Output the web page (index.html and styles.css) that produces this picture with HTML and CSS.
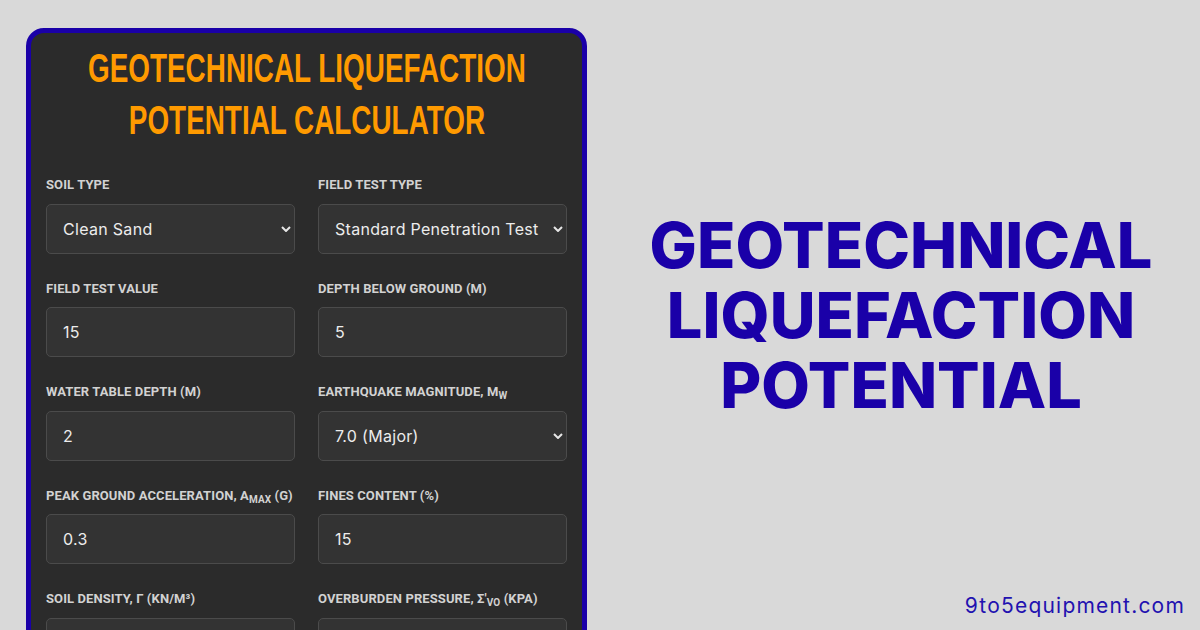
FILE: index.html
```html
<!DOCTYPE html>
<html lang="en">
<head>
<meta charset="utf-8">
<title>Geotechnical Liquefaction Potential Calculator</title>
<link rel="stylesheet" href="styles.css">
</head>
<body>
<main class="page">
  <section class="card">
    <h1 class="card-title"><span class="title-text">Geotechnical Liquefaction<br>Potential Calculator</span></h1>
    <form class="form-grid">
      <div class="field">
        <label class="field-label" for="soil">Soil Type</label>
        <div class="select-wrap">
          <select id="soil" class="control"><option>Clean Sand</option></select>
          <svg class="chev" viewBox="0 0 10 6" width="10" height="6"><path d="M1 1 L5 5 L9 1" fill="none" stroke="#e6e6e6" stroke-width="2"/></svg>
        </div>
      </div>
      <div class="field">
        <label class="field-label" for="test">Field Test Type</label>
        <div class="select-wrap">
          <select id="test" class="control"><option>Standard Penetration Test</option></select>
          <svg class="chev" viewBox="0 0 10 6" width="10" height="6"><path d="M1 1 L5 5 L9 1" fill="none" stroke="#e6e6e6" stroke-width="2"/></svg>
        </div>
      </div>
      <div class="field">
        <label class="field-label" for="ftv">Field Test Value</label>
        <input id="ftv" class="control" type="text" value="15">
      </div>
      <div class="field">
        <label class="field-label" for="depth">Depth Below Ground (m)</label>
        <input id="depth" class="control" type="text" value="5">
      </div>
      <div class="field">
        <label class="field-label" for="wt">Water Table Depth (m)</label>
        <input id="wt" class="control" type="text" value="2">
      </div>
      <div class="field">
        <label class="field-label" for="mag">Earthquake Magnitude, M<sub>w</sub></label>
        <div class="select-wrap">
          <select id="mag" class="control"><option>7.0 (Major)</option></select>
          <svg class="chev" viewBox="0 0 10 6" width="10" height="6"><path d="M1 1 L5 5 L9 1" fill="none" stroke="#e6e6e6" stroke-width="2"/></svg>
        </div>
      </div>
      <div class="field">
        <label class="field-label" for="pga">Peak Ground Acceleration, a<sub>max</sub> (g)</label>
        <input id="pga" class="control" type="text" value="0.3">
      </div>
      <div class="field">
        <label class="field-label" for="fc">Fines Content (%)</label>
        <input id="fc" class="control" type="text" value="15">
      </div>
      <div class="field">
        <label class="field-label" for="dens">Soil Density, γ (kN/m³)</label>
        <input id="dens" class="control" type="text" value="18">
      </div>
      <div class="field">
        <label class="field-label" for="ob">Overburden Pressure, σ'<sub>vo</sub> (kPa)</label>
        <input id="ob" class="control" type="text" value="">
      </div>
    </form>
  </section>
  <section class="hero">
    <div></div>
    <h2 class="hero-title">Geotechnical<br>Liquefaction<br>Potential</h2>
    <div class="hero-foot"><span class="site">9to5equipment.com</span></div>
  </section>
</main>
</body>
</html>
```

FILE: styles.css
```css
html, body {
  margin: 0;
  padding: 0;
}
body {
  width: 1200px;
  height: 630px;
  overflow: hidden;
  background: #d9d9d9;
}
.page {
  display: flex;
  width: 1200px;
  height: 630px;
}
.card {
  flex: none;
  width: 561px;
  min-width: 0;
  box-sizing: border-box;
  margin: 28px 0 0 26px;
  height: 660px;
  border: 5px solid #1a00a8;
  border-radius: 18px;
  background: #2b2b2b;
  padding: 9px 15px 0;
  overflow: hidden;
}
.card-title {
  display: flex;
  justify-content: center;
  margin: 0 0 31px;
  font-family: "Liberation Sans", Arial, sans-serif;
  font-weight: 700;
  font-size: 41px;
  line-height: 52px;
  color: #ff9a00;
  text-align: center;
  text-transform: uppercase;
}
.title-text {
  display: block;
  flex: none;
  white-space: nowrap;
  transform: scaleX(0.68);
  transform-origin: 50% 50%;
}
.form-grid {
  display: grid;
  grid-template-columns: 249px 249px;
  column-gap: 23px;
  row-gap: 27px;
}
.field-label {
  display: block;
  font-family: Roboto, "Liberation Sans", sans-serif;
  font-weight: 700;
  font-size: 13px;
  line-height: 15px;
  letter-spacing: 0.1px;
  color: #d2d2d2;
  text-transform: uppercase;
  margin-bottom: 11.5px;
  white-space: nowrap;
}
.field-label sub {
  font-size: 10px;
  vertical-align: -3px;
  line-height: 0;
}
.select-wrap {
  position: relative;
}
.control {
  display: block;
  width: 100%;
  height: 50px;
  box-sizing: border-box;
  margin: 0;
  background: #333333;
  border: 1px solid #4b4b4b;
  border-radius: 5px;
  padding: 0 15px 0 16px;
  color: #ececec;
  font-family: Inter, "Liberation Sans", sans-serif;
  font-size: 16px;
  letter-spacing: 0.3px;
  outline: none;
  -webkit-appearance: none;
  appearance: none;
}
.chev {
  position: absolute;
  right: 4px;
  top: 22px;
  pointer-events: none;
}
.hero {
  flex: 1;
  min-width: 0;
  display: grid;
  grid-template-rows: 1fr auto 1fr;
  padding-left: 15px;
}
.hero-title {
  margin: 0;
  text-align: center;
  font-family: Inter, "Liberation Sans", sans-serif;
  font-weight: 800;
  font-size: 63px;
  line-height: 70px;
  color: #1a00a8;
  text-transform: uppercase;
}
.hero-foot {
  display: flex;
  align-items: flex-end;
  justify-content: flex-end;
  padding: 0 15px 11px 0;
}
.site {
  font-family: Inter, "Liberation Sans", sans-serif;
  font-size: 21px;
  line-height: 26px;
  letter-spacing: 1.2px;
  color: #2211b0;
}
```
